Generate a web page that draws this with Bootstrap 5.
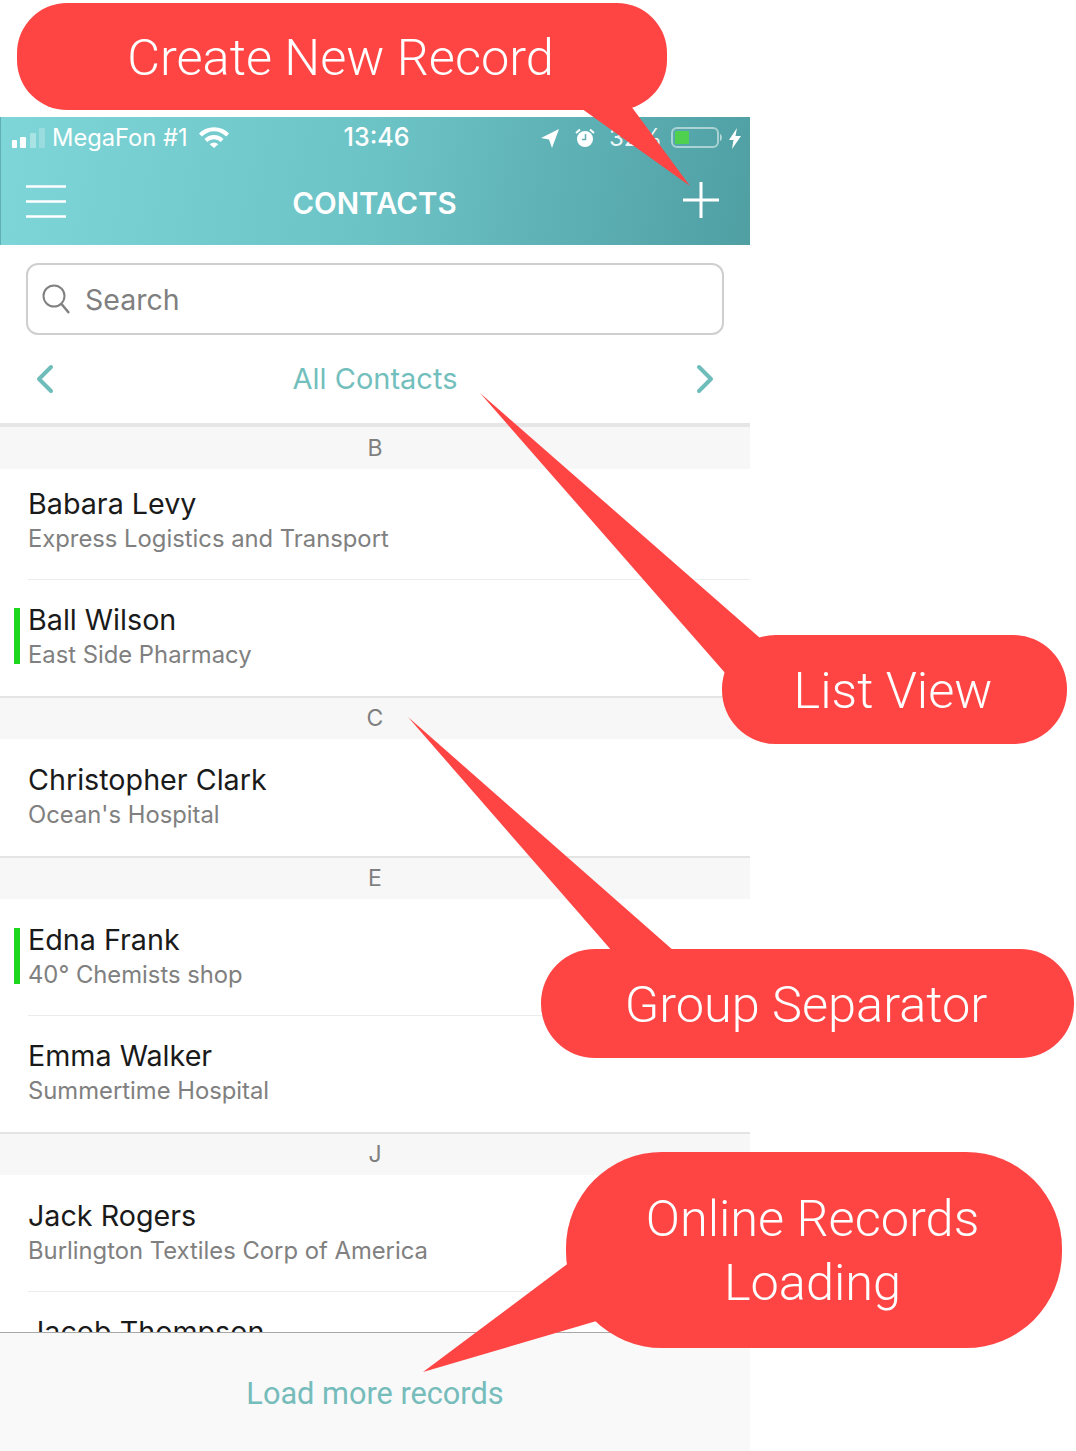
<!doctype html>
<html lang="en"><head><meta charset="utf-8">
<link href="https://cdn.jsdelivr.net/npm/bootstrap@5.3.0/dist/css/bootstrap.min.css" rel="stylesheet">
<style>
html,body{margin:0;background:#fff;font-family:Inter,Roboto,"Liberation Sans",sans-serif;}
.stage{position:relative;width:1076px;height:1451px;overflow:hidden;padding-top:117px;}
.phone{width:750px;height:1334px;position:relative;overflow:hidden;background:#fff;}
.hdr{height:128px;background:linear-gradient(100deg,#7fd6d8 0%,#6cc3c6 50%,#4f9fa3 100%);color:#fff;box-shadow:inset 1px 0 #5fb0b3;}
.sbar{height:42px;padding:0 9px 0 12px;font-size:23.700px;}
.sbar-l{width:300px;}
.sbar-r{width:300px;}
.carrier{margin-left:6px;}
.wifi{margin-left:11px;}
.time{font-size:25px;font-weight:500;}
.pct{width:54px;margin:0 8px 0 14px;font-size:24px;white-space:nowrap;opacity:.9;}
.bolt{margin-left:6px;}
.tbar{height:86px;padding:0 31px 4px 26px;}
.burger{margin-top:2px;}
.ttl{font-size:29.500px;font-weight:600;padding-top:6px;}
.srch-wrap{padding:18px 26px 0;}
.srch{height:72px;border:2px solid #cfcfcf;border-radius:12px;padding:0 14px;font-size:28.500px;color:#7f7f7f;gap:15px;}
.srch span{padding-top:2px;}
.tabs{height:88px;padding:0 36px;color:#73bfbd;font-size:29px;}
.sep-top{border-top:4px solid #e6e6e6;}
.grp{height:42px;background:#f7f7f7;color:#7f7f7f;font-size:23px;line-height:42px;text-align:center;}
.grp-b{border-top:2px solid #e4e4e4;height:43px;line-height:41px;}
.itm{height:116px;padding:21px 0 0 28px;position:relative;}
.itm-first{height:111px;padding-top:16px;}
.itm-g{height:117px;padding-top:22px;}
.itm-line::after{content:"";position:absolute;left:28px;right:0;bottom:0;height:1px;background:#ececec;}
.nm{font-size:28.700px;line-height:38px;color:#1a1a1a;}
.org{font-size:23.800px;line-height:32px;color:#808080;}
.flag{position:absolute;left:14px;top:28px;width:6px;height:56px;background:#1fd61f;}
.itm-g .flag{top:29px;}
.foot{position:absolute;left:0;right:0;top:1215px;height:119px;background:#f9f9f9;border-top:1px solid #a8a8a8;color:#75bcbb;font-size:30.700px;padding-top:4px;font-family:Roboto,sans-serif;}
.callout{position:absolute;background:#ff4444;color:#fff;font-family:Roboto,sans-serif;font-weight:300;font-size:50.500px;text-align:center;display:flex;align-items:center;justify-content:center;padding:2px 3px 0 0;}
.c1{left:17px;top:3px;width:650px;height:107px;border-radius:50px;}
.c2{left:722px;top:635px;width:345px;height:109px;border-radius:54px;}
.c3{left:541px;top:949px;width:533px;height:109px;border-radius:54px;}
.c4{left:566px;top:1152px;width:496px;height:196px;border-radius:96px;line-height:64px;}
.tails{position:absolute;left:0;top:0;width:1076px;height:1451px;}
</style></head><body>
<div class="stage">
 <div class="phone">
  <div class="hdr">
   <div class="sbar d-flex align-items-center">
    <div class="sbar-l d-flex align-items-center">
     <svg width="34" height="22" viewBox="0 0 34 22"><rect x="0" y="13" width="5" height="8" rx="1" fill="#fff"/><rect x="8" y="10" width="6" height="11" rx="1" fill="#fff"/><rect x="18" y="6" width="6" height="15" rx="1" fill="#fff" opacity=".35"/><rect x="27" y="1" width="6" height="20" rx="1" fill="#fff" opacity=".22"/></svg>
     <span class="text-nowrap carrier">MegaFon #1</span>
     <svg width="30" height="21" viewBox="0 0 30 21" class="wifi"><path d="M0 6.500a21 21 0 0 1 30 0l-2.800 3a17 17 0 0 0-24.400 0zM5.500 12a13.500 13.500 0 0 1 19 0l-2.800 3a9.500 9.500 0 0 0-13.400 0zM10.700 17.300a6 6 0 0 1 8.600 0L15 21z" fill="#fff"/></svg>
    </div>
    <div class="flex-grow-1 text-center time">13:46</div>
    <div class="sbar-r d-flex align-items-center justify-content-end">
     <svg width="18" height="19" viewBox="0 0 18 19"><path d="M18 0 0 9l8 1.500L11 19z" fill="#fff"/></svg>
     <svg width="20" height="20" viewBox="0 0 20 20" class="ms-3 flex-shrink-0"><circle cx="10" cy="11" r="8" fill="#fff"/><path d="M10.500 6v5.500H7" stroke="#62b0b3" stroke-width="1.500" fill="none"/><path d="M1 5l4-3.500M19 5l-4-3.500" stroke="#fff" stroke-width="2"/></svg>
     <span class="pct">32%</span>
     <svg width="52" height="22" viewBox="0 0 52 22"><rect x="1" y="1" width="46" height="19" rx="5" fill="none" stroke="#fff" stroke-opacity=".5" stroke-width="2"/><rect x="4" y="4" width="14" height="13" rx="1" fill="#4fd04f"/><path d="M49 7c2.500 1 2.500 6 0 7z" fill="#fff" opacity=".6"/></svg>
     <svg width="12" height="21" viewBox="0 0 12 21" class="bolt"><path d="M8 0 0 12h4.500l-1.500 9 9-13H6.500z" fill="#fff"/></svg>
    </div>
   </div>
   <div class="tbar d-flex align-items-center justify-content-between">
    <svg class="burger" width="40" height="33" viewBox="0 0 40 33"><path d="M0 1.500h40M0 16.500h40M0 31.500h40" stroke="#fff" stroke-width="2.500"/></svg>
    <div class="ttl text-uppercase">Contacts</div>
    <svg width="36" height="36" viewBox="0 0 36 36"><path d="M18 0v36M0 18h36" stroke="#fff" stroke-width="3"/></svg>
   </div>
  </div>
  <div class="srch-wrap"><div class="srch d-flex align-items-center">
   <svg width="28" height="30" viewBox="0 0 28 30"><circle cx="12" cy="12" r="10.500" fill="none" stroke="#808080" stroke-width="2"/><path d="M19.500 20 27 29" stroke="#808080" stroke-width="2.500"/></svg>
   <span>Search</span></div></div>
  <div class="tabs d-flex align-items-center justify-content-between">
   <svg width="18" height="30" viewBox="0 0 18 30"><path d="M15 3 3 15l12 12" fill="none" stroke="#6fbdbb" stroke-width="4" stroke-linecap="round" stroke-linejoin="round"/></svg>
   <span>All Contacts</span>
   <svg width="18" height="30" viewBox="0 0 18 30"><path d="M3 3l12 12L3 27" fill="none" stroke="#6fbdbb" stroke-width="4" stroke-linecap="round" stroke-linejoin="round"/></svg>
  </div>
  <div class="sep-top"></div>
  <div class="grp">B</div>
  <div class="itm itm-first itm-line"><div class="nm">Babara Levy</div><div class="org">Express Logistics and Transport</div></div>
  <div class="itm"><i class="flag"></i><div class="nm">Ball Wilson</div><div class="org">East Side Pharmacy</div></div>
  <div class="grp grp-b">C</div>
  <div class="itm itm-g"><div class="nm">Christopher Clark</div><div class="org">Ocean's Hospital</div></div>
  <div class="grp grp-b">E</div>
  <div class="itm itm-g itm-line"><i class="flag"></i><div class="nm">Edna Frank</div><div class="org">40° Chemists shop</div></div>
  <div class="itm"><div class="nm">Emma Walker</div><div class="org">Summertime Hospital</div></div>
  <div class="grp grp-b">J</div>
  <div class="itm itm-g itm-line"><div class="nm">Jack Rogers</div><div class="org">Burlington Textiles Corp of America</div></div>
  <div class="itm"><div class="nm">Jacob Thompson</div><div class="org">United Medical</div></div>
  <div class="foot d-flex align-items-center justify-content-center">Load more records</div>
 </div>
 <svg class="tails" viewBox="0 0 1076 1451"><g fill="#ff4444">
  <polygon points="578,106 690,186 628,102"/>
  <polygon points="480,393 760,638 726,674"/>
  <polygon points="408,717 674,951 612,951"/>
  <polygon points="423,1372 570,1262 600,1320"/>
 </g></svg>
 <div class="callout c1">Create New Record</div>
 <div class="callout c2">List View</div>
 <div class="callout c3">Group Separator</div>
 <div class="callout c4">Online Records<br>Loading</div>
</div>
<script src="https://cdn.jsdelivr.net/npm/bootstrap@5.3.0/dist/js/bootstrap.bundle.min.js"></script>
</body></html>
